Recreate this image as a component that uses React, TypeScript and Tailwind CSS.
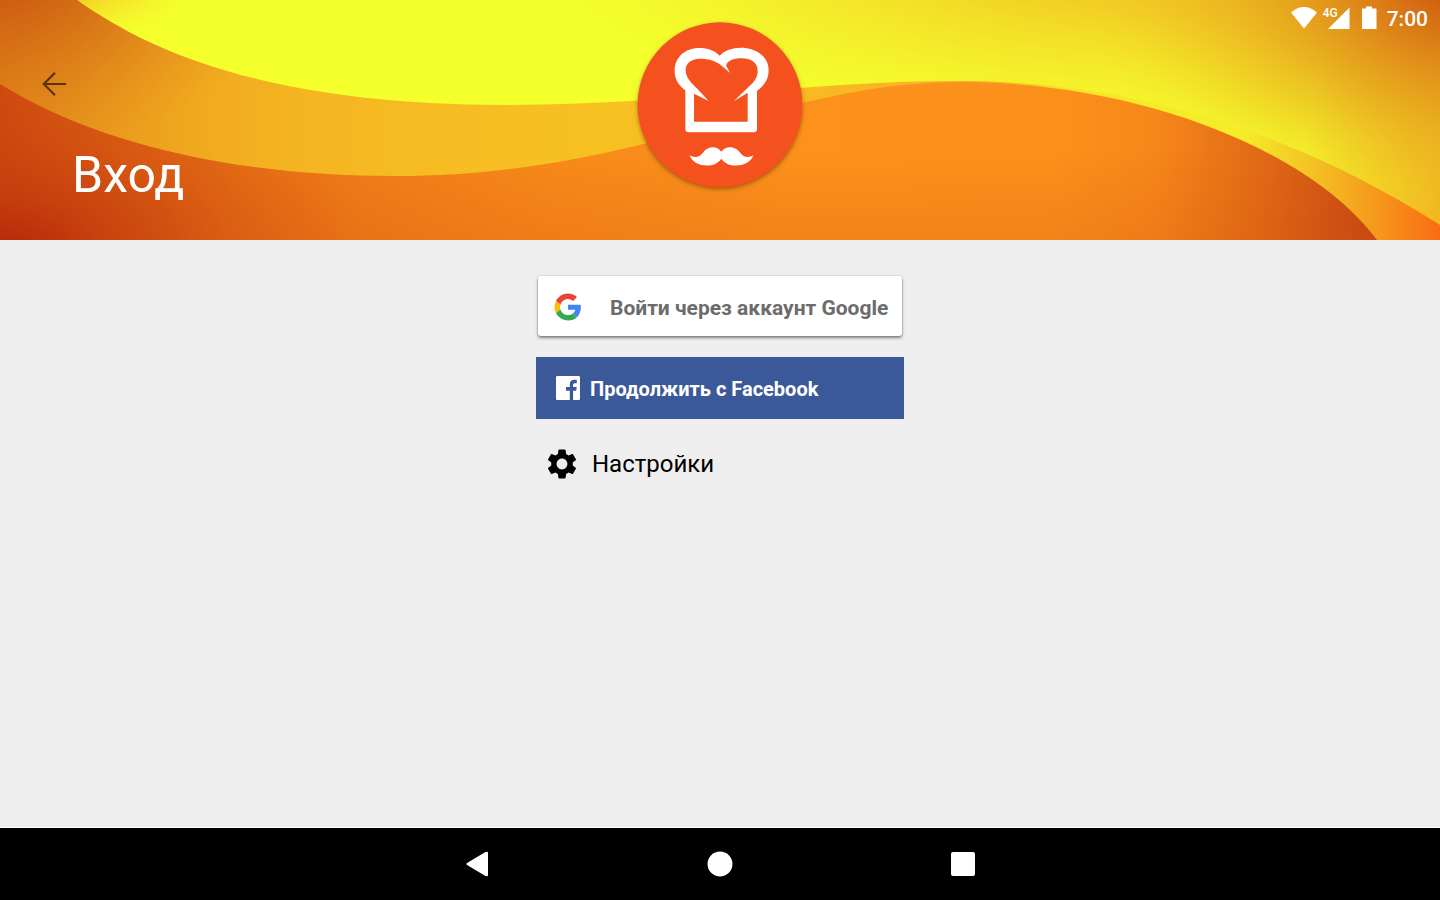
import type { ReactNode } from 'react';
import { MdSettings } from 'react-icons/md';

const BAND = 'M0 0H77C150 52 270 105 505 105C680 105 800 81 960 81C1130 81 1290 130 1440 225V240H0Z';
const WAVE = 'M0 84C100 146 240 176 395 176C640 176 780 82 960 82C1140 82 1310 150 1377 240H0Z';

function HeaderArt() {
  return (
    <svg
      className="absolute inset-0 w-full h-full"
      viewBox="0 0 1440 240"
      preserveAspectRatio="none"
      aria-hidden="true"
    >
      <defs>
        <radialGradient id="corner" gradientUnits="userSpaceOnUse" cx="0" cy="0" r="1" gradientTransform="translate(1480 -30) scale(400 270)">
          <stop offset="0" stopColor="#c8480d" />
          <stop offset="0.15" stopColor="#d05c10" stopOpacity="0.95" />
          <stop offset="0.35" stopColor="#dc8017" stopOpacity="0.85" />
          <stop offset="0.55" stopColor="#e49c1b" stopOpacity="0.65" />
          <stop offset="0.75" stopColor="#ebb01e" stopOpacity="0.35" />
          <stop offset="0.9" stopColor="#f0c022" stopOpacity="0.1" />
          <stop offset="1" stopColor="#f4d024" stopOpacity="0" />
        </radialGradient>
        <radialGradient id="topGlow" gradientUnits="userSpaceOnUse" cx="0" cy="0" r="1" gradientTransform="translate(1240 -60) scale(720 200)">
          <stop offset="0" stopColor="#eca41e" stopOpacity="0.9" />
          <stop offset="0.4" stopColor="#f2bc22" stopOpacity="0.7" />
          <stop offset="0.75" stopColor="#f4d025" stopOpacity="0.3" />
          <stop offset="1" stopColor="#f5e028" stopOpacity="0" />
        </radialGradient>
        <radialGradient id="topLeft" gradientUnits="userSpaceOnUse" cx="0" cy="0" r="1" gradientTransform="translate(60 -10) scale(130 50)">
          <stop offset="0" stopColor="#f7b822" />
          <stop offset="1" stopColor="#f7e028" stopOpacity="0" />
        </radialGradient>
        <linearGradient id="rightEdge" gradientUnits="userSpaceOnUse" x1="1310" y1="120" x2="1450" y2="150">
          <stop offset="0" stopColor="#f0b020" stopOpacity="0" />
          <stop offset="1" stopColor="#f0b020" stopOpacity="0.9" />
        </linearGradient>
        <linearGradient id="band" gradientUnits="userSpaceOnUse" x1="0" y1="0" x2="1440" y2="0">
          <stop offset="0" stopColor="#e08319" />
          <stop offset="0.07" stopColor="#e8981c" />
          <stop offset="0.14" stopColor="#f0aa1f" />
          <stop offset="0.21" stopColor="#f5b521" />
          <stop offset="0.3" stopColor="#f6bc22" />
          <stop offset="0.42" stopColor="#f7c122" />
          <stop offset="0.58" stopColor="#f9b823" />
          <stop offset="0.68" stopColor="#fab024" />
          <stop offset="0.74" stopColor="#f7e426" />
          <stop offset="0.86" stopColor="#f5ee29" />
          <stop offset="0.9" stopColor="#f3cc25" />
          <stop offset="0.94" stopColor="#f4a81e" />
          <stop offset="1" stopColor="#fa6c14" />
        </linearGradient>
        <radialGradient id="bandShade" gradientUnits="userSpaceOnUse" cx="0" cy="0" r="1" gradientTransform="translate(0 -40) scale(300 190)">
          <stop offset="0" stopColor="#c44b10" />
          <stop offset="0.5" stopColor="#cf6013" stopOpacity="0.5" />
          <stop offset="1" stopColor="#e08018" stopOpacity="0" />
        </radialGradient>
        <linearGradient id="wave" gradientUnits="userSpaceOnUse" x1="0" y1="0" x2="1440" y2="0">
          <stop offset="0" stopColor="#cf4a10" />
          <stop offset="0.08" stopColor="#db5d13" />
          <stop offset="0.17" stopColor="#e87016" />
          <stop offset="0.26" stopColor="#f07e18" />
          <stop offset="0.38" stopColor="#f78a19" />
          <stop offset="0.55" stopColor="#fc921b" />
          <stop offset="0.73" stopColor="#fb911b" />
          <stop offset="0.8" stopColor="#f68819" />
          <stop offset="0.88" stopColor="#e06815" />
          <stop offset="0.95" stopColor="#c84812" />
        </linearGradient>
        <linearGradient id="waveShade" gradientUnits="userSpaceOnUse" x1="0" y1="150" x2="0" y2="240">
          <stop offset="0" stopColor="#d05010" stopOpacity="0" />
          <stop offset="1" stopColor="#d05010" stopOpacity="0.22" />
        </linearGradient>
        <radialGradient id="waveCorner" gradientUnits="userSpaceOnUse" cx="0" cy="0" r="1" gradientTransform="translate(0 250) scale(360 170)">
          <stop offset="0" stopColor="#b8260a" />
          <stop offset="0.3" stopColor="#bc300b" stopOpacity="0.55" />
          <stop offset="0.65" stopColor="#c0380c" stopOpacity="0.2" />
          <stop offset="1" stopColor="#c03a0c" stopOpacity="0" />
        </radialGradient>
      </defs>

      <rect width="1440" height="240" fill="#f4ff2c" />
      <rect width="1440" height="240" fill="url(#topLeft)" />
      <rect width="1440" height="240" fill="url(#topGlow)" />
      <rect width="1440" height="240" fill="url(#rightEdge)" />
      <rect width="1440" height="240" fill="url(#corner)" />

      <path d={BAND} fill="url(#band)" />
      <path d="M0 0H77C150 52 270 105 505 105V240H0Z" fill="url(#bandShade)" />

      <path d={WAVE} fill="url(#wave)" />
      <path d={WAVE} fill="url(#waveShade)" />
      <path d="M0 84C100 146 240 176 395 176V240H0Z" fill="url(#waveCorner)" />
    </svg>
  );
}

function ChefLogo() {
  return (
    <svg
      className="w-[190px] h-[190px] drop-shadow-[0_2px_2px_rgba(90,40,0,0.5)]"
      viewBox="0 0 570 570"
      role="img"
      aria-label="Chef"
    >
      <circle cx="285" cy="284" r="247" fill="#f4511e" />
      <path
        fill="#fff"
        fillRule="evenodd"
        d="M181 241C160 225 149 207 149 182C149 142 180 114 222 114C248 114 270 122 284 137C298 121 322 113 348 113C396 113 431 142 431 180C431 208 418 226 396 243V357Q396 367 386 367H191Q181 367 181 357Z
           M182 180C182 204 200 220 217 236L251 273L207 251V335H368V248L326 274L376 226C388 214 398 202 398 182C398 158 378 145 350 145C324 145 306 153 303 167C308 174 312 181 314 189C305 179 297 172 286 164C270 152 250 146 224 146C198 147 182 160 182 180Z"
      />
      <path
        fill="#fff"
        d="M289 425C276 406 249 408 236 425C225 440 212 446 194 436C202 460 230 470 258 466C272 463 283 455 289 446C295 455 306 463 320 466C348 470 377 460 385 436C367 446 354 440 343 425C330 408 302 406 289 425Z"
      />
    </svg>
  );
}

function StatusBar() {
  return (
    <div className="flex items-start justify-end h-9 pt-1 pr-3 text-white">
      <svg className="w-7 h-7" viewBox="0 0 28 28" fill="currentColor" aria-label="Wi-Fi">
        <path d="M13 24.500L0 8.600Q6 3 13 3T26 8.600Z" />
      </svg>
      <div className="relative w-8 h-7">
        <svg className="w-8 h-7" viewBox="0 0 32 28" fill="currentColor" aria-hidden="true">
          <path d="M9 25L30.500 3.500V25Z" />
        </svg>
        <span className="absolute left-1 top-[3px] text-[12px] leading-3 font-medium">4G</span>
      </div>
      <svg className="ml-2 w-7 h-7" viewBox="0 0 28 28" fill="currentColor" aria-label="Battery">
        <path d="M7 2.500H13V4.500H17Q17.500 4.500 17.500 5V24.500Q17.500 25 17 25H3.500Q3 25 3 24.500V5Q3 4.500 3.500 4.500H7Z" />
      </svg>
      <time className="text-[21px] leading-[30px] font-medium">7:00</time>
    </div>
  );
}

function BackArrow() {
  return (
    <svg className="w-9 h-9" viewBox="0 0 36 36" fill="none" stroke="currentColor" strokeWidth="2.2" aria-hidden="true">
      <path d="M30 18H8M19 6.800L7.800 18L19 29.200" />
    </svg>
  );
}

function GoogleIcon() {
  return (
    <svg className="w-7 h-7" viewBox="-1 -1 50 50" aria-hidden="true">
      <path fill="#EA4335" d="M24 9.500c3.540 0 6.710 1.220 9.210 3.600l6.850-6.850C35.900 2.380 30.470 0 24 0 14.620 0 6.510 5.380 2.560 13.220l7.980 6.190C12.430 13.720 17.740 9.500 24 9.500z" />
      <path fill="#4285F4" d="M46.980 24.550c0-1.570-.15-3.090-.38-4.550H24v9.020h12.940c-.58 2.960-2.260 5.480-4.780 7.180l7.730 6c4.510-4.180 7.090-10.360 7.090-17.650z" />
      <path fill="#FBBC05" d="M10.530 28.590c-.48-1.450-.76-2.990-.76-4.590s.27-3.140.76-4.590l-7.980-6.190C.92 16.460 0 20.120 0 24c0 3.880.92 7.540 2.560 10.780l7.970-6.190z" />
      <path fill="#34A853" d="M24 48c6.480 0 11.930-2.130 15.890-5.810l-7.730-6c-2.150 1.450-4.920 2.300-8.160 2.300-6.260 0-11.570-4.220-13.470-9.910l-7.980 6.190C6.510 42.620 14.620 48 24 48z" />
    </svg>
  );
}

function FacebookIcon() {
  return (
    <svg className="w-6 h-6" viewBox="0 0 24 24" fill="#fff" aria-hidden="true">
      <path d="M22.700 0H1.300C.6 0 0 .6 0 1.300v21.400c0 .7.600 1.300 1.300 1.300h12.500v-9.300H10v-3.600h3.800V8.400c0-3.100 1.700-4.600 4.500-4.600 1.300 0 2.200.1 2.500.14v3.240h-1.900c-1.500 0-1.800.7-1.800 1.760v2.160h3.600l-.5 3.600h-3.100V24h5.600c.7 0 1.300-.6 1.300-1.300V1.300C24 .6 23.400 0 22.700 0z" />
    </svg>
  );
}

function NavButton({ label, children }: { label: string; children: ReactNode }) {
  return (
    <button type="button" aria-label={label} className="flex items-center justify-center w-[243px] h-full">
      <svg className="w-7 h-7" viewBox="0 0 28 28" fill="#fff" aria-hidden="true">
        {children}
      </svg>
    </button>
  );
}

export default function App() {
  return (
    <div className="flex flex-col min-h-screen bg-[#eeeeee] font-['Roboto',sans-serif]">
      <header className="relative h-60">
        <HeaderArt />
        <div className="relative grid grid-cols-[1fr_auto_1fr] items-start">
          <div className="flex flex-col items-start pt-16 pl-9">
            <button type="button" aria-label="Назад" className="py-0.5 text-black/60">
              <BackArrow />
            </button>
            <h1 className="pt-[39px] pl-9 text-[50px] leading-[64px] text-white">Вход</h1>
          </div>
          <div className="pt-[10px]">
            <ChefLogo />
          </div>
          <StatusBar />
        </div>
      </header>

      <main className="flex-1 flex flex-col w-[368px] mx-auto pt-9">
        <button
          type="button"
          className="flex items-center h-[60px] mx-0.5 pl-4 pt-0.5 rounded-[3px] bg-white text-[#6c6c6c] shadow-[0_2px_3px_rgba(0,0,0,0.45),0_0_2px_rgba(0,0,0,0.2)]"
        >
          <GoogleIcon />
          <span className="pl-7 pt-0.5 text-[21px] leading-6 font-bold whitespace-nowrap">
            Войти через аккаунт Google
          </span>
        </button>
        <button
          type="button"
          className="flex items-center h-[62px] mt-[21px] pl-5 bg-[#3b5998] text-white"
        >
          <FacebookIcon />
          <span className="pl-[10px] pt-0.5 text-[20px] leading-6 font-bold whitespace-nowrap">
            Продолжить с Facebook
          </span>
        </button>
        <button type="button" className="flex items-center h-[62px] mt-[14px] pl-2 text-black">
          <MdSettings className="w-9 h-9" />
          <span className="pl-3 text-[24px] leading-7">Настройки</span>
        </button>
      </main>

      <nav className="flex justify-center h-[73px] bg-black border-t border-white">
        <NavButton label="Назад">
          <path d="M4 13L22.500 2Q25 1 25 3V25Q25 27 22.500 26L4 15Q2.500 14 4 13Z" />
        </NavButton>
        <NavButton label="Домой">
          <circle cx="14" cy="14" r="12.500" />
        </NavButton>
        <NavButton label="Недавние">
          <rect x="2" y="2" width="24" height="24" rx="2" />
        </NavButton>
      </nav>
    </div>
  );
}
